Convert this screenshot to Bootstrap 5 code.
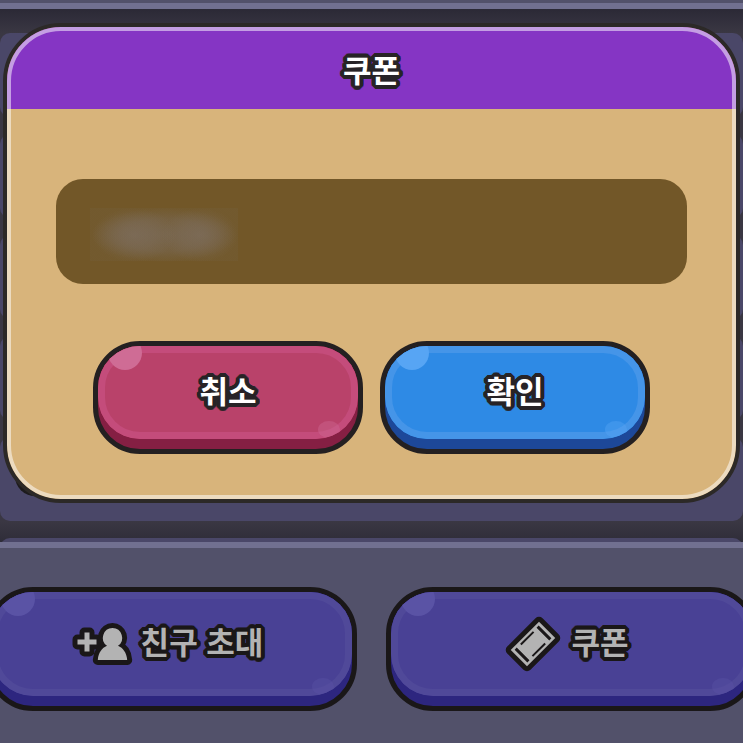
<!DOCTYPE html>
<html lang="ko">
<head>
<meta charset="utf-8">
<meta name="viewport" content="width=device-width, initial-scale=1">
<title>쿠폰</title>
<link href="https://cdn.jsdelivr.net/npm/bootstrap@5.3.0/dist/css/bootstrap.min.css" rel="stylesheet">
<style>
  body {
    background: #52516a;
    font-family: "Noto Sans CJK KR", "Noto Sans", sans-serif;
    min-height: 100vh;
  }
  .top-edge { height: 9px; background: #52516a; border-bottom: 6px solid #717090; }

  /* Area behind the dialog */
  .stage {
    background: linear-gradient(#2b2936, #3a3743 24px, #3a3743 512px, #2f2d39);
    padding: 14px 3px 39px;
    isolation: isolate;
  }
  .slots { inset: 24px 0 0; z-index: -1; gap: 17px; }
  .slot { height: 84px; border-radius: 10px; background: #4a4768; }
  .slot-last { height: 20px; }
  .knob { left: 15px; bottom: 46px; width: 44px; height: 44px; border-radius: 20px; background: #1d1b1d; z-index: -1; }

  .coupon-dialog {
    background: #d8b47b;
    border: 4px solid #2c2927;
    border-radius: 58px;
  }
  .coupon-dialog::after {
    content: "";
    position: absolute;
    inset: 0;
    border: 4px solid rgba(255, 255, 255, .52);
    border-radius: 54px;
    pointer-events: none;
  }
  .dialog-head { background: #8535c4; height: 82px; }
  .dialog-form { padding: 70px 49px 45px; }

  .outlined {
    color: #fff;
    font-size: 31px;
    font-weight: 700;
    line-height: 40px;
    padding-bottom: 6px;
    --ink: #272326;
    text-shadow:
      4px 0 var(--ink), -4px 0 var(--ink), 0 4px var(--ink), 0 -4px var(--ink),
      4px 1px var(--ink), 4px -1px var(--ink), -4px 1px var(--ink), -4px -1px var(--ink),
      1px 4px var(--ink), -1px 4px var(--ink), 1px -4px var(--ink), -1px -4px var(--ink),
      3px 2px var(--ink), 3px -2px var(--ink), -3px 2px var(--ink), -3px -2px var(--ink),
      2px 3px var(--ink), -2px 3px var(--ink), 2px -3px var(--ink), -2px -3px var(--ink),
      2px 0 var(--ink), -2px 0 var(--ink), 0 2px var(--ink), 0 -2px var(--ink);
  }
  .dialog-head .outlined { padding: 2px 0 0; }
  .code-box {
    height: 105px;
    border: 0;
    border-radius: 27px;
    padding: 0 36px;
    color: #d8d0c4;
    font-size: 31px;
    background:
      radial-gradient(closest-side, rgba(128, 114, 104, .5), rgba(128, 114, 104, .3) 50%, transparent) 36px 29px / 84px 54px no-repeat,
      radial-gradient(closest-side, rgba(128, 114, 104, .5), rgba(128, 114, 104, .3) 50%, transparent) 106px 29px / 76px 54px no-repeat,
      radial-gradient(closest-side, rgba(124, 110, 98, .5), rgba(124, 110, 98, .35) 60%, transparent) 36px 29px / 144px 54px no-repeat,
      linear-gradient(rgba(116, 100, 72, .2), rgba(116, 100, 72, .2)) 34px 29px / 148px 53px no-repeat,
      #725728;
  }
  .code-box:focus { outline: 3px solid #8535c4; }
  .dialog-actions { gap: 17px; margin-top: 57px; }

  /* Raised game button: outline, dark lower rim, glossy face */
  .game-btn {
    border: 5px solid #242021;
    border-radius: 47px;
    padding: 0 0 10px;
    background: var(--rim);
  }
  .game-btn .face {
    background: var(--face);
    border-radius: 42px;
    height: 93px;
  }
  .face::before, .face::after { content: ""; position: absolute; z-index: 1; background: var(--shine); }
  .face::before { left: 10px; top: -10px; width: 34px; height: 34px; border-radius: 50%; }
  .face::after { right: 18px; bottom: 1px; width: 22px; height: 17px; border-radius: 50%; opacity: .4; }
  .game-btn .glow { inset: 0; border: 7px solid var(--edge); border-radius: 42px; }
  .game-btn .caption { z-index: 2; }
  .dialog-actions .game-btn { width: 270px; }
  .btn-cancel { --rim: #851f43; --face: #b9426a; --edge: #c44c7b; --shine: #cf6c95; }
  .btn-ok { --rim: #1d4899; --face: #2e8ae5; --edge: #4595e8; --shine: #57a5f4; }
  .btn-menu { --rim: #2d267f; --face: #494195; --edge: #504999; --shine: #5a53a5; }

  .menu-bar {
    border-top: 6px solid #717090;
    padding: 39px 0 32px;
  }
  .menu-row { gap: 29px; margin: 0 -14px; }
  .btn-menu { border-color: #1a1718; }
  .btn-menu .face { height: 104px; }
  .btn-menu .outlined { color: #b3b3b3; --ink: #1a1718; }
  .btn-menu .caption { gap: 8px; padding-right: 9px; }
</style>
</head>
<body class="overflow-x-hidden">
<div class="overflow-hidden">
  <div class="top-edge"></div>

  <main class="stage position-relative">
    <div class="slots position-absolute d-flex flex-column overflow-hidden" aria-hidden="true">
      <div class="slot flex-shrink-0"></div>
      <div class="slot flex-shrink-0"></div>
      <div class="slot flex-shrink-0"></div>
      <div class="slot flex-shrink-0"></div>
      <div class="slot flex-shrink-0"></div>
      <div class="slot slot-last flex-shrink-0"></div>
    </div>
    <div class="knob position-absolute" aria-hidden="true"></div>

    <section class="coupon-dialog position-relative overflow-hidden" role="dialog" aria-labelledby="dialog-title">
      <header class="dialog-head d-flex align-items-center justify-content-center">
        <h1 id="dialog-title" class="outlined m-0">쿠폰</h1>
      </header>
      <form class="dialog-form" onsubmit="return false">
        <input type="text" class="code-box d-block w-100" aria-labelledby="dialog-title">
        <div class="dialog-actions d-flex justify-content-center">
          <button type="button" class="game-btn btn-cancel">
            <span class="face position-relative overflow-hidden d-flex align-items-center justify-content-center">
              <span class="glow position-absolute"></span>
              <span class="caption outlined position-relative">취소</span>
            </span>
          </button>
          <button type="submit" class="game-btn btn-ok">
            <span class="face position-relative overflow-hidden d-flex align-items-center justify-content-center">
              <span class="glow position-absolute"></span>
              <span class="caption outlined position-relative">확인</span>
            </span>
          </button>
        </div>
      </form>
    </section>
  </main>

  <nav class="menu-bar">
    <div class="menu-row d-flex">
      <button type="button" class="game-btn btn-menu flex-fill w-50">
        <span class="face position-relative overflow-hidden d-flex align-items-center justify-content-center">
          <span class="glow position-absolute"></span>
          <span class="caption position-relative d-flex align-items-center">
            <svg width="62" height="46" viewBox="70 621 62 46" aria-hidden="true">
              <g fill="#b3b3b3" stroke="#1a1718" stroke-width="10" stroke-linejoin="round" paint-order="stroke">
                <path d="M83.500 632.500h5v7h7v5h-7v7h-5v-7h-7v-5h7z"/>
                <path d="M111.500 628a9.800 9.800 0 0 1 5.500 17.800c5 2 8.700 7 9.200 14.200H96.800c.5-7.200 4.200-12.200 9.200-14.200A9.800 9.800 0 0 1 111.500 628z"/>
              </g>
            </svg>
            <span class="outlined">친구 초대</span>
          </span>
        </span>
      </button>
      <button type="button" class="game-btn btn-menu flex-fill w-50">
        <span class="face position-relative overflow-hidden d-flex align-items-center justify-content-center">
          <span class="glow position-absolute"></span>
          <span class="caption position-relative d-flex align-items-center">
            <svg width="58" height="58" viewBox="-28 -29 58 58" aria-hidden="true">
              <g transform="rotate(-45)">
                <rect x="-20" y="-11.500" width="40" height="23" fill="#b3b3b3" stroke="#1a1718" stroke-width="10" stroke-linejoin="round" paint-order="stroke"/>
                <path d="M-15.500 -9v18M15.500 -9v18" stroke="#1a1718" stroke-width="3"/>
                <path d="M-9 -8.200H9M-9 8.200H9" stroke="#1a1718" stroke-width="2"/>
              </g>
            </svg>
            <span class="outlined">쿠폰</span>
          </span>
        </span>
      </button>
    </div>
  </nav>
</div>
<script src="https://cdn.jsdelivr.net/npm/bootstrap@5.3.0/dist/js/bootstrap.bundle.min.js"></script>
</body>
</html>
